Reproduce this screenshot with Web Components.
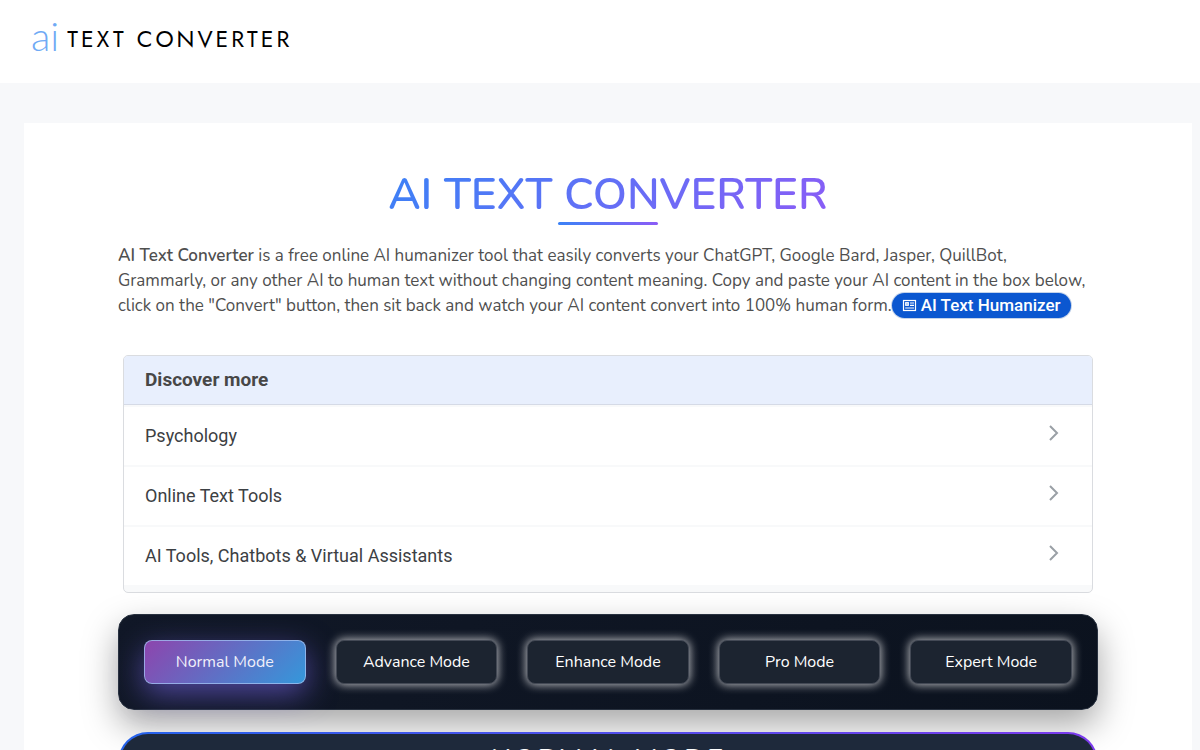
<!DOCTYPE html>
<html lang="en">
<head>
<meta charset="utf-8">
<meta name="viewport" content="width=device-width, initial-scale=1">
<title>AI Text Converter</title>
<style>
    body {
        margin: 0;
        background: #f7f8fa;
        color: #4f4f4f;
        font-family: Nunito, Lato, "Liberation Sans", sans-serif;
        font-size: 17px;
        line-height: 25px;
    }
    p { margin: 0; }
    b { font-weight: 600; }
</style>
</head>
<body>
<site-header></site-header>
<page-card>
    <page-title>AI TEXT CONVERTER</page-title>
    <p>
        <b>AI Text Converter</b> is a free online AI humanizer tool that easily converts your ChatGPT, Google Bard, Jasper, QuillBot, Grammarly, or any other AI to human text without changing content meaning. Copy and paste your AI content in the box below, click on the "Convert" button, then sit back and watch your AI content convert into 100% human form.<pill-link href="#humanizer">AI Text Humanizer</pill-link>
    </p>
    <discover-list heading="Discover more">
        <discover-item href="#psychology">Psychology</discover-item>
        <discover-item href="#text-tools">Online Text Tools</discover-item>
        <discover-item href="#assistants">AI Tools, Chatbots &amp; Virtual Assistants</discover-item>
    </discover-list>
    <mode-bar>
        <mode-button active>Normal Mode</mode-button>
        <mode-button>Advance Mode</mode-button>
        <mode-button>Enhance Mode</mode-button>
        <mode-button>Pro Mode</mode-button>
        <mode-button>Expert Mode</mode-button>
    </mode-bar>
    <mode-panel>NORMAL MODE</mode-panel>
</page-card>

<script>
class SiteHeader extends HTMLElement {
    constructor() {
        super();
        this.attachShadow({ mode: 'open' });
    }

    connectedCallback() {
        this.shadowRoot.innerHTML = `
            <style>
                :host { display: block; background: #fff; }
                header { display: flex; padding: 12px 32px 16px 31px; }
                a {
                    display: flex;
                    align-items: flex-start;
                    gap: 8px;
                    color: #000;
                    text-decoration: none;
                }
                .mark {
                    color: #6faaf5;
                    font-family: Lato, sans-serif;
                    font-weight: 300;
                    font-size: 40px;
                    line-height: 48px;
                }
                .name {
                    font-family: Jost, Nunito, Lato, sans-serif;
                    font-size: 23px;
                    letter-spacing: 3px;
                    line-height: 55px;
                }
            </style>
            <header>
                <a href="#home"><span class="mark">ai</span><span class="name">TEXT CONVERTER</span></a>
            </header>
        `;
    }
}

class PageCard extends HTMLElement {
    constructor() {
        super();
        this.attachShadow({ mode: 'open' });
    }

    connectedCallback() {
        this.shadowRoot.innerHTML = `
            <style>
                :host { display: block; padding: 40px 8px 0 24px; }
                main { background: #fff; padding: 45px 24px 24px; }
                .inner { max-width: 980px; margin: 0 auto; }
            </style>
            <main><div class="inner"><slot></slot></div></main>
        `;
    }
}

class PageTitle extends HTMLElement {
    constructor() {
        super();
        this.attachShadow({ mode: 'open' });
    }

    connectedCallback() {
        this.shadowRoot.innerHTML = `
            <style>
                :host {
                    display: flex;
                    flex-direction: column;
                    align-items: center;
                    margin-bottom: 18px;
                }
                h1 {
                    margin: 0;
                    font-size: 44px;
                    font-weight: 600;
                    line-height: 54px;
                    background: linear-gradient(135deg, #3b82f6, #8b5cf6);
                    -webkit-background-clip: text;
                    background-clip: text;
                    color: transparent;
                }
                .rule {
                    width: 100px;
                    height: 3px;
                    border-radius: 2px;
                    background: linear-gradient(90deg, #3b82f6, #8b5cf6);
                }
            </style>
            <h1><slot></slot></h1>
            <div class="rule"></div>
        `;
    }
}

class PillLink extends HTMLElement {
    constructor() {
        super();
        this.attachShadow({ mode: 'open' });
    }

    connectedCallback() {
        this.shadowRoot.innerHTML = `
            <style>
                :host { display: inline-block; vertical-align: top; }
                a {
                    display: flex;
                    align-items: center;
                    gap: 4px;
                    padding: 0 10px;
                    border-radius: 13px;
                    background: #0b57d0;
                    box-shadow: 0 0 0 1px #c4d3ea;
                    color: #fff;
                    font-family: Roboto, sans-serif;
                    font-weight: 500;
                    text-decoration: none;
                    white-space: nowrap;
                }
            </style>
            <a href="${this.getAttribute('href')}">
                <svg width="15" height="15" viewBox="0 0 15 15" fill="none" stroke="#fff" aria-hidden="true">
                    <rect x="1.5" y="2.5" width="12" height="10" stroke-width="1.2"/>
                    <rect x="3.8" y="4.8" width="2.4" height="2.4" stroke-width="1.4"/>
                    <path d="M8 5h4M8 7.4h4M3.2 10h8.8" stroke-width="1.1"/>
                </svg>
                <slot></slot>
            </a>
        `;
    }
}

class DiscoverList extends HTMLElement {
    constructor() {
        super();
        this.attachShadow({ mode: 'open' });
    }

    connectedCallback() {
        this.shadowRoot.innerHTML = `
            <style>
                :host { display: block; margin: 37px 5px 21px; }
                section {
                    border: 1px solid #dadce0;
                    border-radius: 5px;
                    overflow: hidden;
                    background: #f8f9fa;
                    font-family: "Google Sans", Roboto, sans-serif;
                    font-size: 18px;
                }
                h2 {
                    margin: 0;
                    padding: 0 21px;
                    border-bottom: 1px solid #d5dae6;
                    background: #e8effd;
                    color: #474747;
                    font-size: 19px;
                    font-weight: 700;
                    line-height: 48px;
                }
                .items { display: flex; flex-direction: column; gap: 2px; padding: 2px 0 7px; }
            </style>
            <section>
                <h2>${this.getAttribute('heading')}</h2>
                <div class="items"><slot></slot></div>
            </section>
        `;
    }
}

class DiscoverItem extends HTMLElement {
    constructor() {
        super();
        this.attachShadow({ mode: 'open' });
    }

    connectedCallback() {
        this.shadowRoot.innerHTML = `
            <style>
                :host { display: block; }
                a {
                    display: flex;
                    align-items: center;
                    justify-content: space-between;
                    padding: 16px 32px 17px 21px;
                    background: #fff;
                    color: #3c4043;
                    text-decoration: none;
                }
                svg { margin-bottom: 6px; }
            </style>
            <a href="${this.getAttribute('href')}">
                <span><slot></slot></span>
                <svg width="12" height="18" viewBox="0 0 12 18" fill="none" stroke="#9aa0a6" stroke-width="2" aria-hidden="true">
                    <path d="M2 2l7 7-7 7"/>
                </svg>
            </a>
        `;
    }
}

class ModeBar extends HTMLElement {
    constructor() {
        super();
        this.attachShadow({ mode: 'open' });
    }

    connectedCallback() {
        this.shadowRoot.innerHTML = `
            <style>
                :host { display: block; }
                nav {
                    display: grid;
                    grid-template-columns: repeat(5, 1fr);
                    gap: 30px;
                    padding: 25px;
                    border: 1px solid #28313f;
                    border-radius: 16px;
                    background: linear-gradient(135deg, #111827, #0b121e);
                    box-shadow: 0 15px 35px rgba(0,0,0,0.35);
                }
            </style>
            <nav aria-label="Modes"><slot></slot></nav>
        `;

        this.addEventListener('click', (e) => {
            const picked = e.target.closest('mode-button');
            if (!picked) return;
            this.querySelectorAll('mode-button').forEach(b => b.toggleAttribute('active', b === picked));
        });
    }
}

class ModeButton extends HTMLElement {
    constructor() {
        super();
        this.attachShadow({ mode: 'open' });
    }

    connectedCallback() {
        this.shadowRoot.innerHTML = `
            <style>
                :host { display: block; }
                button {
                    width: 100%;
                    height: 44px;
                    padding: 0;
                    border: 1px solid #434955;
                    border-radius: 8px;
                    background: #1c2430;
                    box-shadow: 0 0 10px 1px rgba(255,255,255,0.7);
                    color: #fff;
                    font-family: inherit;
                    font-size: 16px;
                    cursor: pointer;
                }
                :host([active]) button {
                    border-color: rgba(160,190,240,0.8);
                    background: linear-gradient(135deg, #8e44ad, #3498db) border-box;
                    box-shadow: 0 10px 30px rgba(106,90,205,0.7);
                    color: #f0f0fa;
                }
            </style>
            <button type="button"><slot></slot></button>
        `;
    }
}

class ModePanel extends HTMLElement {
    constructor() {
        super();
        this.attachShadow({ mode: 'open' });
    }

    connectedCallback() {
        this.shadowRoot.innerHTML = `
            <style>
                :host { display: block; margin-top: 22px; }
                section {
                    min-height: 300px;
                    border: 2px solid transparent;
                    border-radius: 30px;
                    background:
                        linear-gradient(#1e293b, #1e293b) padding-box,
                        linear-gradient(90deg, #2563eb, #7c3aed) border-box;
                }
                h2 {
                    margin: 0;
                    padding-top: 6px;
                    color: #fff;
                    font-size: 28px;
                    font-weight: 600;
                    line-height: 40px;
                    letter-spacing: 2px;
                    text-align: center;
                }
            </style>
            <section><h2><slot></slot></h2></section>
        `;
    }
}

customElements.define('site-header', SiteHeader);
customElements.define('page-card', PageCard);
customElements.define('page-title', PageTitle);
customElements.define('pill-link', PillLink);
customElements.define('discover-list', DiscoverList);
customElements.define('discover-item', DiscoverItem);
customElements.define('mode-bar', ModeBar);
customElements.define('mode-button', ModeButton);
customElements.define('mode-panel', ModePanel);
</script>
</body>
</html>
